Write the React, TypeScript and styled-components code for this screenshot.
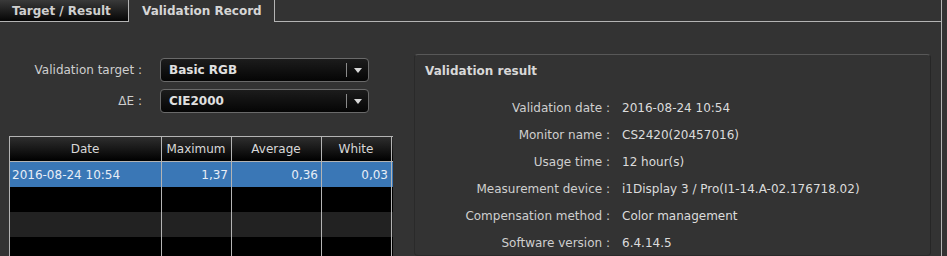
import React from 'react';
import styled, { createGlobalStyle } from 'styled-components';

const GlobalStyle = createGlobalStyle`
    html, body {
        margin: 0;
        padding: 0;
        background: #333333;
    }
    body {
        font-family: "DejaVu Sans", Verdana, sans-serif;
        font-size: 12px;
        color: #d4d4d4;
    }
`;

const Page = styled.div`
    width: 947px;
    height: 256px;
    overflow: hidden;
    background: #333333;
`;

const TabBar = styled.div`
    display: flex;
    width: 942px;
    height: 22px;
`;

const Tab = styled.div<{ $active?: boolean; $width: number }>`
    box-sizing: border-box;
    width: ${(p) => p.$width}px;
    height: 22px;
    display: flex;
    align-items: center;
    padding-left: ${(p) => (p.$active ? 13 : 12)}px;
    font-weight: bold;
    font-size: 12px;
    color: ${(p) => (p.$active ? '#d6d6d6' : '#cfcfcf')};
    background: ${(p) => (p.$active ? '#333333' : 'linear-gradient(#3a3a3a, #050505)')};
    border-right: 1px solid #b4b4b4;
    border-bottom: ${(p) => (p.$active ? 'none' : '1px solid #b4b4b4')};
`;

const TabFiller = styled.div`
    flex: 1;
    border-bottom: 1px solid #b4b4b4;
    border-right: 1px solid #b4b4b4;
`;

const Content = styled.div`
    display: flex;
    width: 942px;
    box-sizing: border-box;
    height: 234px;
    border-right: 1px solid #b4b4b4;
`;

const LeftColumn = styled.div`
    width: 384px;
    padding-left: 9px;
    padding-top: 36px;
    box-sizing: content-box;
`;

const Form = styled.div`
    display: grid;
    grid-template-columns: 133px 209px;
    column-gap: 18px;
    row-gap: 7px;
    align-items: center;
`;

const Label = styled.div`
    text-align: right;
    color: #cfcfcf;
    white-space: nowrap;
`;

const Select = styled.div`
    box-sizing: border-box;
    height: 24px;
    display: flex;
    align-items: center;
    border: 1px solid #6a6a6a;
    border-radius: 4px;
    background: linear-gradient(#1c1c1c, #050505);
    font-weight: bold;
    color: #e0e0e0;
    padding-left: 8px;
`;

const SelectText = styled.span`
    flex: 1;
`;

const SelectDivider = styled.span`
    width: 1px;
    height: 14px;
    background: #8a8a8a;
`;

const SelectArrow = styled.span`
    width: 21px;
    display: flex;
    justify-content: center;
`;

const Table = styled.div`
    margin-top: 23px;
    width: 384px;
    box-sizing: border-box;
    border-left: 1px solid #b4b4b4;
    border-top: 1px solid #b4b4b4;
`;

const TableRow = styled.div<{ $kind: 'head' | 'selected' | 'dark' | 'gray' }>`
    display: grid;
    grid-template-columns: 152px 70px 90px 70px;
    height: 25px;
    background: ${(p) =>
        p.$kind === 'head'
            ? 'linear-gradient(#2e2e2e, #000000)'
            : p.$kind === 'selected'
              ? '#3a77b6'
              : p.$kind === 'gray'
                ? '#222222'
                : '#000000'};
    border-bottom: ${(p) => (p.$kind === 'head' ? '1px solid #b4b4b4' : 'none')};
    box-sizing: border-box;
`;

const Cell = styled.div<{ $align: 'left' | 'right' | 'center'; $head?: boolean }>`
    box-sizing: border-box;
    display: flex;
    align-items: center;
    justify-content: ${(p) => (p.$align === 'left' ? 'flex-start' : p.$align === 'right' ? 'flex-end' : 'center')};
    padding: 0 3px 0 2px;
    border-right: 1px solid #b4b4b4;
    color: ${(p) => (p.$head ? '#d8d8d8' : '#e8eef6')};
    white-space: nowrap;
    overflow: hidden;
`;

const Panel = styled.div`
    margin-left: 21px;
    margin-top: 32px;
    width: 517px;
    box-sizing: border-box;
    border: 1px solid #2a2a2a;
    border-top-color: #585858;
    border-right-color: #262626;
    border-radius: 4px;
    padding: 8px 0 0 10px;
`;

const PanelTitle = styled.div`
    font-weight: bold;
    color: #d8d8d8;
    height: 16px;
    line-height: 16px;
`;

const InfoList = styled.div`
    margin-top: 15px;
    display: grid;
    grid-template-columns: 185px auto;
    column-gap: 12px;
    grid-auto-rows: 27px;
    align-items: center;
`;

const InfoLabel = styled.div`
    text-align: right;
    color: #cfcfcf;
    white-space: nowrap;
`;

const InfoValue = styled.div`
    color: #dcdcdc;
    white-space: nowrap;
`;

const info: [string, string][] = [
    ['Validation date :', '2016-08-24 10:54'],
    ['Monitor name :', 'CS2420(20457016)'],
    ['Usage time :', '12 hour(s)'],
    ['Measurement device :', 'i1Display 3 / Pro(I1-14.A-02.176718.02)'],
    ['Compensation method :', 'Color management'],
    ['Software version :', '6.4.14.5'],
];

const Arrow = () => (
    <svg width="8" height="5" viewBox="0 0 8 5">
        <path d="M0 0 H8 L4 5 Z" fill="#d8d8d8" />
    </svg>
);

const Dropdown: React.FC<{ value: string }> = ({ value }) => (
    <Select>
        <SelectText>{value}</SelectText>
        <SelectDivider />
        <SelectArrow>
            <Arrow />
        </SelectArrow>
    </Select>
);

const App: React.FC = () => (
    <Page>
        <GlobalStyle />
        <TabBar>
            <Tab $width={129}>Target / Result</Tab>
            <Tab $width={146} $active>
                Validation Record
            </Tab>
            <TabFiller />
        </TabBar>
        <Content>
            <LeftColumn>
                <Form>
                    <Label>Validation target :</Label>
                    <Dropdown value="Basic RGB" />
                    <Label>ΔE :</Label>
                    <Dropdown value="CIE2000" />
                </Form>
                <Table>
                    <TableRow $kind="head">
                        <Cell $align="center" $head>Date</Cell>
                        <Cell $align="center" $head>Maximum</Cell>
                        <Cell $align="center" $head>Average</Cell>
                        <Cell $align="center" $head>White</Cell>
                    </TableRow>
                    <TableRow $kind="selected">
                        <Cell $align="left">2016-08-24 10:54</Cell>
                        <Cell $align="right">1,37</Cell>
                        <Cell $align="right">0,36</Cell>
                        <Cell $align="right">0,03</Cell>
                    </TableRow>
                    {(['dark', 'gray', 'dark'] as const).map((kind, i) => (
                        <TableRow key={i} $kind={kind}>
                            <Cell $align="left" />
                            <Cell $align="right" />
                            <Cell $align="right" />
                            <Cell $align="right" />
                        </TableRow>
                    ))}
                </Table>
            </LeftColumn>
            <Panel>
                <PanelTitle>Validation result</PanelTitle>
                <InfoList>
                    {info.map(([label, value]) => (
                        <React.Fragment key={label}>
                            <InfoLabel>{label}</InfoLabel>
                            <InfoValue>{value}</InfoValue>
                        </React.Fragment>
                    ))}
                </InfoList>
            </Panel>
        </Content>
    </Page>
);

export default App;
